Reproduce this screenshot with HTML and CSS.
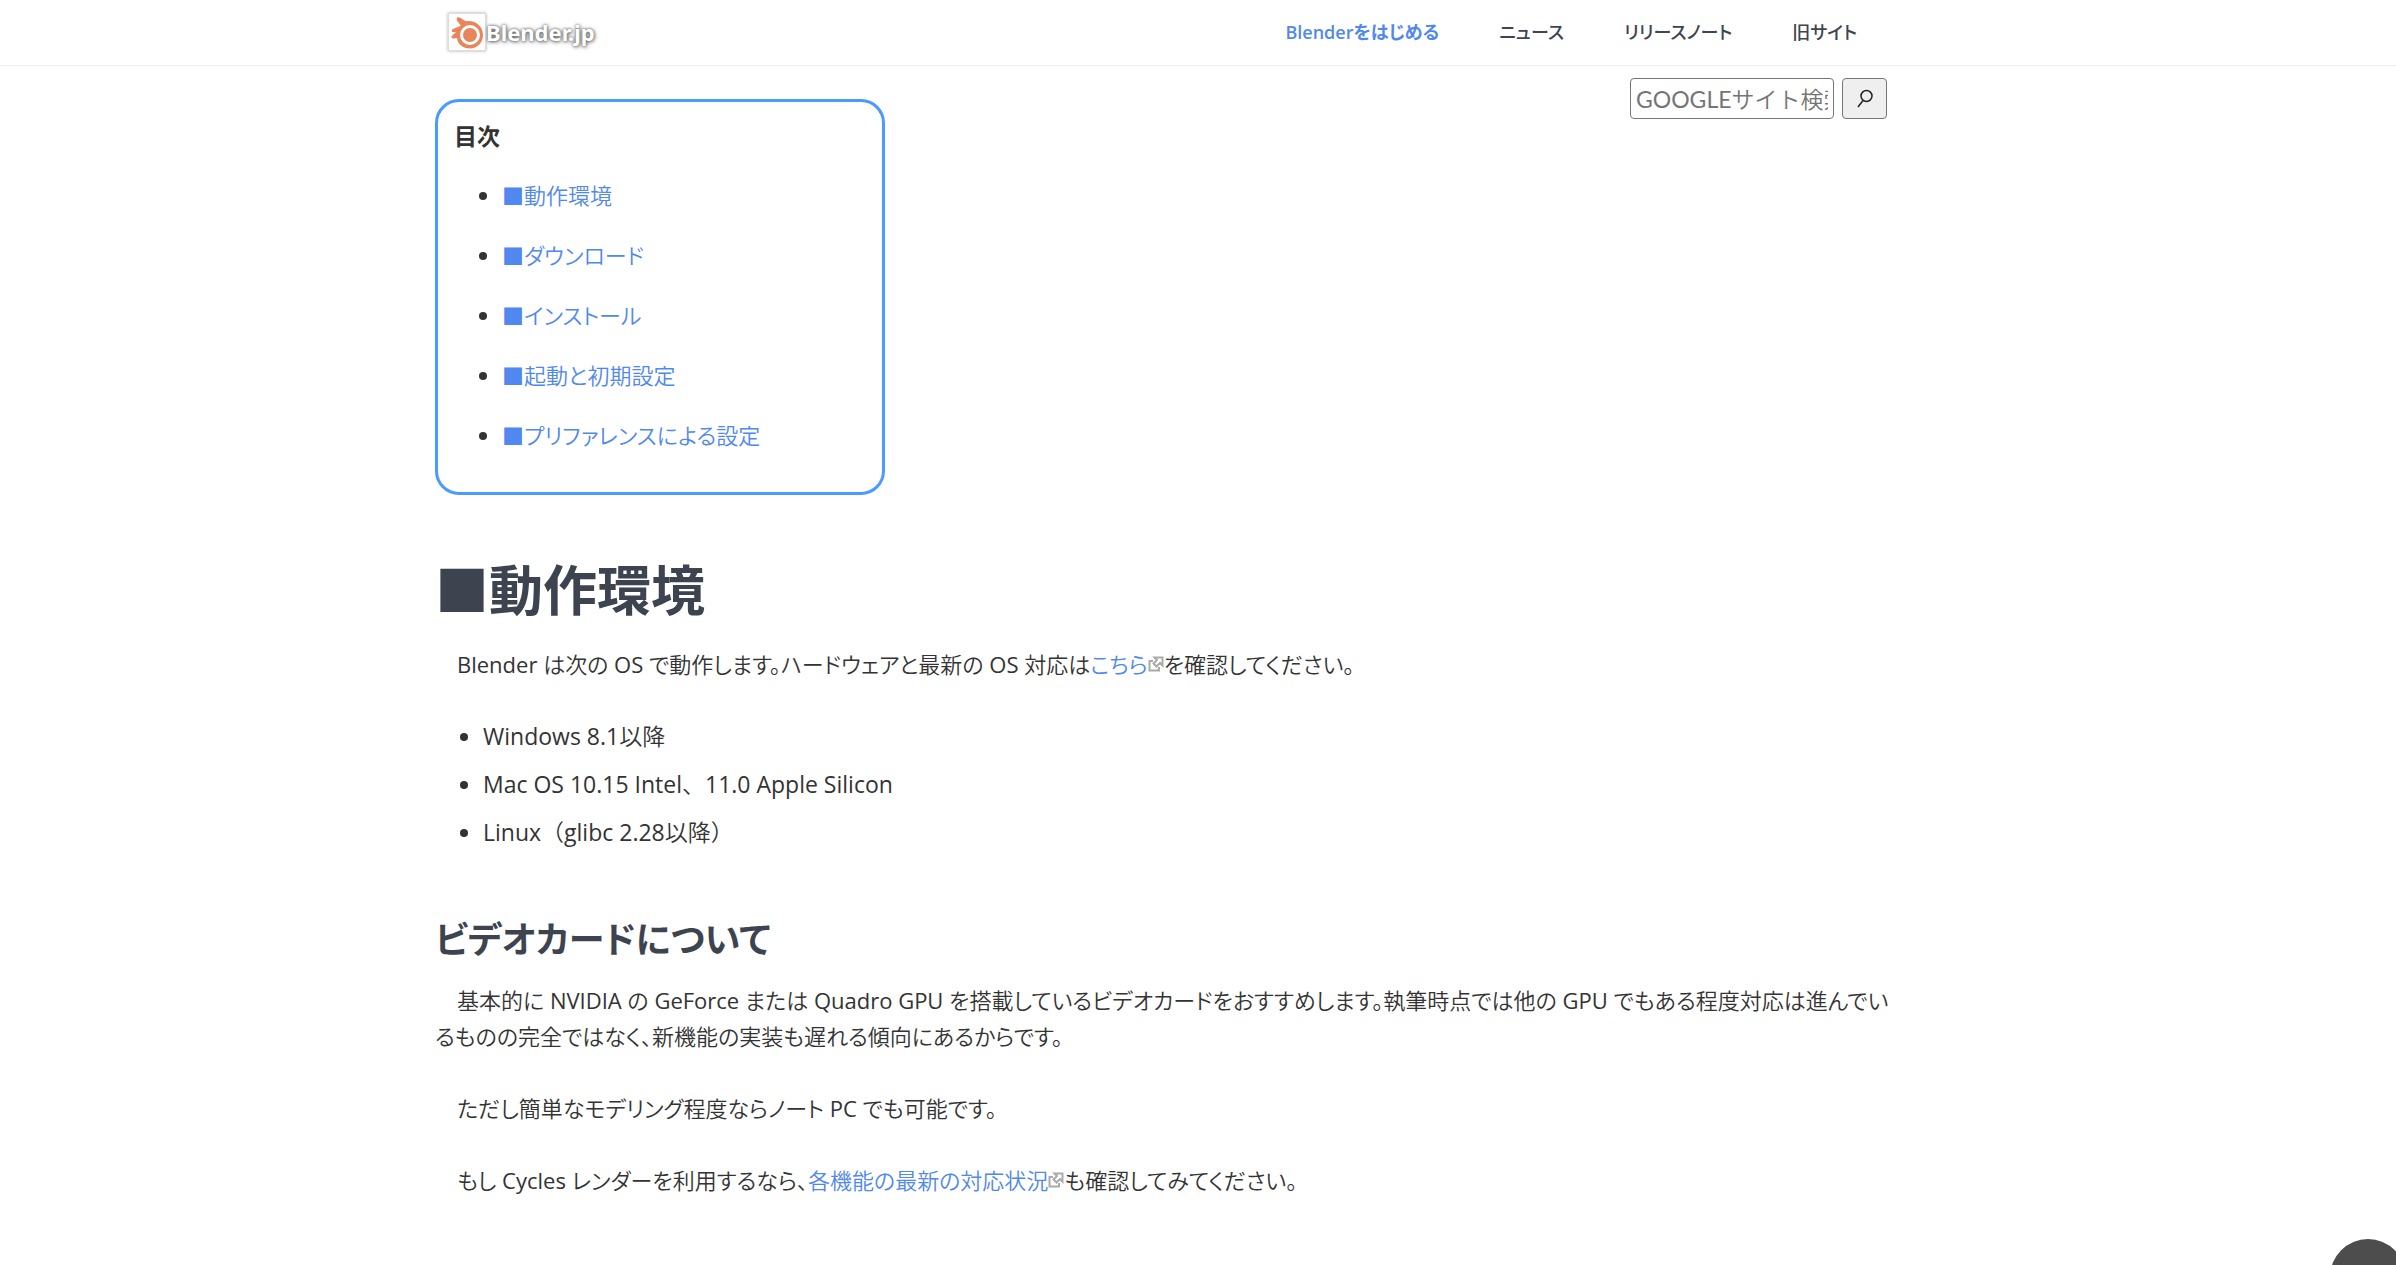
FILE: index.html
```html
<!DOCTYPE html>
<html lang="ja">
<head>
<meta charset="utf-8">
<meta name="viewport" content="width=device-width, initial-scale=1">
<title>Blender.jp</title>
<link rel="stylesheet" href="styles.css">
</head>
<body>
<svg class="defs" aria-hidden="true">
  <symbol id="external" viewBox="0 0 16 16">
    <path d="M5 5H1.500V14.500H11V11M6.500 1.500H14.500V9.500L12 7L8.500 10.500L5.500 7.500L9 4Z" fill="none" stroke="currentColor" stroke-width="2"/>
  </symbol>
</svg>
<header class="site-header">
  <div class="header-inner">
    <a class="logo" href="#">
      <svg class="logo-mark" viewBox="0 0 36 36" aria-hidden="true">
        <path fill="#e8855b" d="M8.500 3.500C10 2.800 11.500 4 13 5L17 7.200C26 5.800 34 12 34 21C34 29 28 34.500 21 34.500C14 34.500 8.500 30 8 24L4 24.500C2 24.300 2 22.500 3.500 21.300L7 18L4 18.200C2.200 18 2.600 15.500 4.500 14.800L12 11.800L9 8C7.500 6.800 7 4.500 8.500 3.500Z"/>
        <circle cx="21" cy="21" r="8.500" fill="#e8855b" stroke="#fff" stroke-width="3"/>
      </svg>
      <span class="logo-text">Blender.jp</span>
    </a>
    <nav class="nav">
      <a class="current" href="#">Blenderをはじめる</a>
      <a href="#">ニュース</a>
      <a href="#">リリースノート</a>
      <a href="#">旧サイト</a>
    </nav>
  </div>
</header>
<main class="content">
  <div class="top">
    <section class="toc">
      <p class="toc-title">目次</p>
      <ul>
        <li><a href="#env">■動作環境</a></li>
        <li><a href="#download">■ダウンロード</a></li>
        <li><a href="#">■インストール</a></li>
        <li><a href="#">■起動と初期設定</a></li>
        <li><a href="#">■プリファレンスによる設定</a></li>
      </ul>
    </section>
    <form class="search">
      <input type="text" placeholder="GOOGLEサイト検索" aria-label="GOOGLEサイト検索">
      <button type="button" aria-label="検索">
        <svg viewBox="0 0 18 20" aria-hidden="true"><circle cx="10.500" cy="7" r="5.500"/><path d="M7 11.500L2 18"/></svg>
      </button>
    </form>
  </div>
  <h1 id="env">■動作環境</h1>
  <p>　Blender は次の OS で動作します。ハードウェアと最新の OS 対応は<a href="#">こちら<svg class="ext" aria-hidden="true"><use href="#external"/></svg></a>を確認してください。</p>
  <ul class="os">
    <li>Windows 8.1以降</li>
    <li>Mac OS 10.15 Intel、11.0 Apple Silicon</li>
    <li>Linux（glibc 2.28以降）</li>
  </ul>
  <h2>ビデオカードについて</h2>
  <p>　基本的に NVIDIA の GeForce または Quadro GPU を搭載しているビデオカードをおすすめします。執筆時点では他の GPU でもある程度対応は進んでいるものの完全ではなく、新機能の実装も遅れる傾向にあるからです。</p>
  <p>　ただし簡単なモデリング程度ならノート PC でも可能です。</p>
  <p>　もし Cycles レンダーを利用するなら、<a href="#">各機能の最新の対応状況<svg class="ext" aria-hidden="true"><use href="#external"/></svg></a>も確認してみてください。</p>
  <h1 id="download">■ダウンロード</h1>
</main>
<button class="to-top" type="button" aria-label="ページの先頭へ"></button>
</body>
</html>
```
FILE: styles.css
```css
* { box-sizing: border-box; }

body {
  margin: 0;
  color: #333;
  background: #fff;
  font: 400 22px/36px "Open Sans", "Noto Sans CJK JP DemiLight", "Noto Sans CJK JP", sans-serif;
  font-feature-settings: "palt";
}

a { color: #5088f0; text-decoration: none; }
p, h1, h2, ul { margin: 0; }
.defs { display: none; }

.site-header {
  padding-right: 74px;
  border-bottom: 1px solid #eaebec;
}

.header-inner {
  display: flex;
  align-items: center;
  justify-content: space-between;
  max-width: 1452px;
  height: 65px;
  margin: 0 auto;
  padding: 0 30px 2px 13px;
}

.logo { display: flex; align-items: center; }

.logo-mark {
  width: 38px;
  height: 38px;
  border: 1px solid #ddd;
  box-shadow: 0 0 3px #aaa;
}

.logo-text {
  color: #fff;
  font: 700 22px/32px "Noto Sans", sans-serif;
  text-shadow: 0 0 3px #555, 1px 1px 4px #777;
}

.nav {
  display: flex;
  gap: 60px;
  font-family: "Open Sans", "Noto Sans CJK JP", sans-serif;
  font-size: 18px;
  font-weight: 500;
}

.nav a { color: #3f4451; }
.nav .current { color: #5088f0; font-weight: 600; }

.content {
  max-width: 1526px;
  margin: 0 auto;
  padding-right: 74px;
}

.top { display: flex; justify-content: space-between; align-items: flex-start; }

.toc {
  width: 450px;
  margin-top: 33px;
  padding: 15px 16px;
  border: 3px solid #4a9aff;
  border-radius: 24px;
}

.toc-title { font-family: "Noto Sans CJK JP", sans-serif; font-size: 23px; font-weight: 700; }
.toc ul { padding-left: 48px; }
.toc li { margin: 24px 0; }

.search { display: flex; gap: 8px; margin-top: 12px; }

.search input {
  width: 204px;
  height: 41px;
  padding: 0 5px;
  border: 1px solid #767676;
  border-radius: 4px;
  font: 400 23px/36px "Lato", "Noto Sans CJK JP DemiLight", "Noto Sans CJK JP", sans-serif;
}

.search input::placeholder { color: #757575; opacity: 1; }

.search button {
  display: grid;
  place-items: center;
  width: 45px;
  height: 41px;
  padding: 0;
  border: 1px solid #767676;
  border-radius: 4px;
  background: #efefef;
}

.search svg { width: 18px; height: 20px; fill: none; stroke: #222; stroke-width: 1.500; }

h1, h2 { color: #3d434f; font-family: "Noto Sans CJK JP", sans-serif; font-weight: 700; }
h1 { margin: 53px 0 18px; font-size: 54px; line-height: 80px; }
h2 { margin: 60px 0 18px; font-size: 36px; line-height: 54px; }
.content > p { margin: 0 -6px 36px 0; }

.os { padding-left: 48px; font-size: 23px; font-feature-settings: normal; }
.os li { margin-bottom: 12px; }

.ext { width: 16px; height: 16px; color: #aaa; vertical-align: 1px; }

.to-top {
  position: fixed;
  right: -10px;
  bottom: -50px;
  width: 76px;
  height: 76px;
  border: 0;
  border-radius: 50%;
  background: #4d4d4d;
}
```
